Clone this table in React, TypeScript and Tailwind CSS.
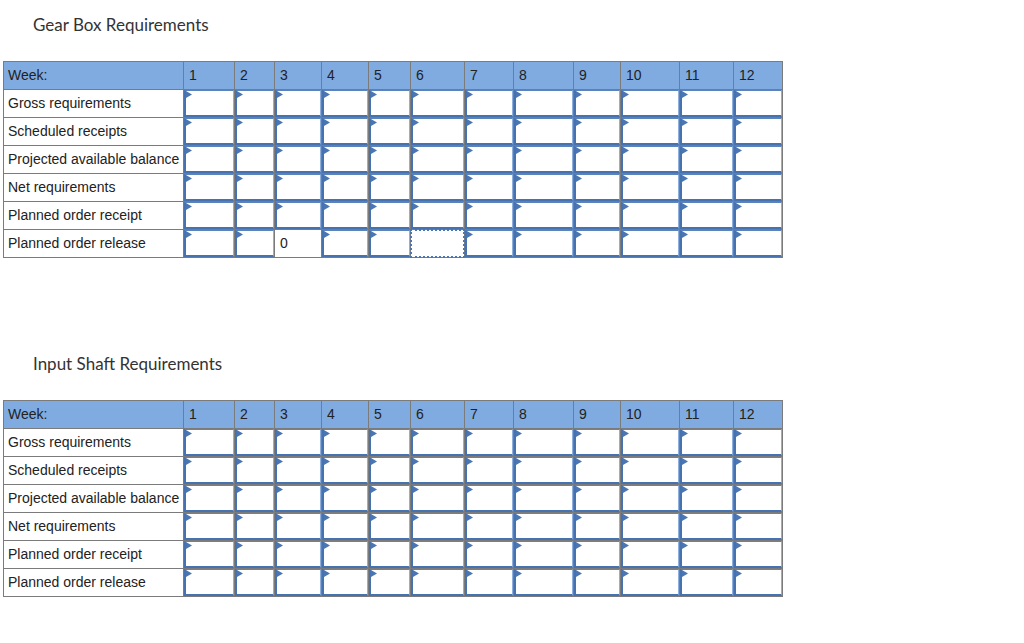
import { Fragment } from "react";

const weeks = ["1", "2", "3", "4", "5", "6", "7", "8", "9", "10", "11", "12"];

const rows = [
  "Gross requirements",
  "Scheduled receipts",
  "Projected available balance",
  "Net requirements",
  "Planned order receipt",
  "Planned order release",
];

type Special = { row: number; col: number; kind: "zero" | "focus" };

function InputCell({ focus }: { focus?: boolean }) {
  if (focus) {
    return (
      <div className="relative bg-white">
        <div className="absolute -inset-[1px] border-2 border-dotted border-[#4a76b3]" />
      </div>
    );
  }
  return (
    <div className="relative bg-white border-t border-r border-t-[#5b84bd] border-r-[#8fb0dc] border-l-2 border-b-2 border-[#4672b0]">
      <svg className="absolute left-0 top-0" width="6" height="7" viewBox="0 0 6 7">
        <path d="M0 0 L6 3.5 L0 7 Z" fill="#4a76b3" />
      </svg>
    </div>
  );
}

function MrpTable({ specials }: { specials: Special[] }) {
  return (
    <div
      className="ml-[3px] grid w-[780px] gap-[1px] border border-[#7b7b7b] bg-[#7b7b7b] text-[14px] text-[#222]"
      style={{
        gridTemplateColumns: "179px 50px 39px 46px 46px 41px 53px 48px 59px 46px 58px 53px 48px",
        gridAutoRows: "27px",
        fontFamily: '"Liberation Sans", Arial, sans-serif',
      }}
    >
      <div className="flex items-center bg-[#80abe0] pl-[4px]">Week:</div>
      {weeks.map((w) => (
        <div key={w} className="flex items-center bg-[#80abe0] pl-[5px]">
          {w}
        </div>
      ))}
      {rows.map((label, r) => (
        <Fragment key={label}>
          <div className="flex items-center bg-white pl-[4px]">{label}</div>
          {weeks.map((w, c) => {
            const sp = specials.find((s) => s.row === r && s.col === c);
            if (sp?.kind === "zero") {
              return (
                <div key={w} className="flex items-center bg-white pl-[5px]">
                  0
                </div>
              );
            }
            return <InputCell key={w} focus={sp?.kind === "focus"} />;
          })}
        </Fragment>
      ))}
    </div>
  );
}

export default function App() {
  return (
    <div className="min-h-screen bg-white pt-[15px]">
      <div
        className="h-[20px] pl-[33px] text-[17px] leading-[20px] text-[#333]"
        style={{ fontFamily: "Lato, 'Open Sans', sans-serif" }}
      >
        Gear Box Requirements
      </div>
      <div className="mt-[26px]">
        <MrpTable
          specials={[
            { row: 5, col: 2, kind: "zero" },
            { row: 5, col: 5, kind: "focus" },
          ]}
        />
      </div>
      <div
        className="mt-[96px] h-[20px] pl-[33px] text-[17px] leading-[20px] text-[#333]"
        style={{ fontFamily: "Lato, 'Open Sans', sans-serif" }}
      >
        Input Shaft Requirements
      </div>
      <div className="mt-[26px]">
        <MrpTable specials={[]} />
      </div>
    </div>
  );
}
